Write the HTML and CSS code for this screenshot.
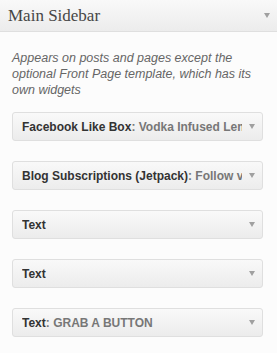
FILE: index.html
```html
<!DOCTYPE html>
<html>
<head>
<meta charset="utf-8">
<link rel="stylesheet" href="styles.css">
</head>
<body>
<div class="sidebar">
  <div class="sidebar-head">
    <h3 class="sidebar-title">Main Sidebar</h3>
    <span class="arrow head-arrow"></span>
  </div>
  <div class="sidebar-body">
    <p class="description">Appears on posts and pages except the optional Front Page template, which has its own widgets</p>
    <div class="widget"><h4 class="widget-title">Facebook Like Box<span class="in-title">: Vodka Infused Lemonade</span></h4><span class="arrow"></span></div>
    <div class="widget"><h4 class="widget-title">Blog Subscriptions (Jetpack)<span class="in-title">: Follow via Email</span></h4><span class="arrow"></span></div>
    <div class="widget"><h4 class="widget-title">Text</h4><span class="arrow"></span></div>
    <div class="widget"><h4 class="widget-title">Text</h4><span class="arrow"></span></div>
    <div class="widget"><h4 class="widget-title">Text<span class="in-title">: GRAB A BUTTON</span></h4><span class="arrow"></span></div>
  </div>
</div>
</body>
</html>
```
FILE: styles.css
```css
html, body {
  margin: 0;
  padding: 0;
  background: #fcfcfc;
  width: 277px;
  height: 353px;
  overflow: hidden;
}
.sidebar {
  font-family: "Liberation Sans", Arial, sans-serif;
}
.sidebar-head {
  height: 32px;
  box-sizing: border-box;
  border-bottom: 1px solid #dfdfdf;
  background: linear-gradient(to bottom, #f9f9f9, #ececec);
  display: flex;
  align-items: center;
  padding: 0 7px 0 8px;
}
.sidebar-title {
  margin: 0;
  flex: 1;
  font-family: "Liberation Serif", "Times New Roman", serif;
  font-weight: normal;
  font-size: 17px;
  color: #464646;
}
.arrow {
  flex: none;
  width: 0;
  height: 0;
  border-left: 3.5px solid transparent;
  border-right: 3.5px solid transparent;
  border-top: 5px solid #a0a0a0;
}
.sidebar-body {
  padding: 18px 14px 0 12px;
}
.description {
  margin: 0 0 14px;
  font-size: 12.5px;
  line-height: 16px;
  font-style: italic;
  color: #666;
}
.widget {
  height: 29px;
  box-sizing: border-box;
  border: 1px solid #dfdfdf;
  border-radius: 3px;
  background: linear-gradient(to bottom, #f9f9f9, #ececec);
  display: flex;
  align-items: center;
  padding: 0 7px 0 9px;
  margin-bottom: 20px;
}
.widget-title {
  margin: 0 7px 0 0;
  flex: 1;
  min-width: 0;
  overflow: hidden;
  white-space: nowrap;
  font-size: 12px;
  font-weight: bold;
  color: #333;
}
.in-title {
  color: #777;
}
```
